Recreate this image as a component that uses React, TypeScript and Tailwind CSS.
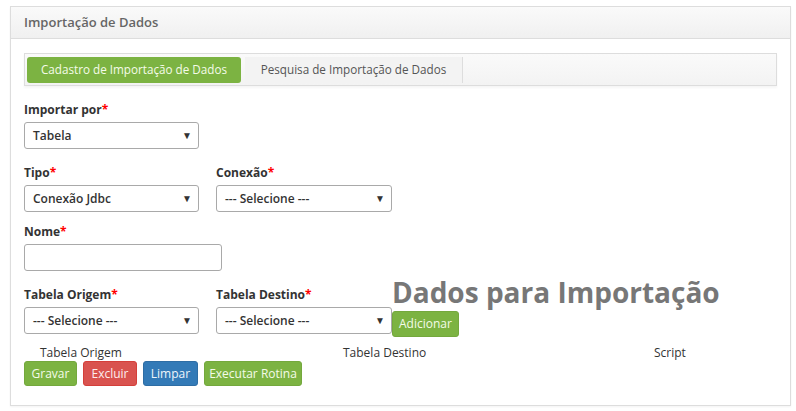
const font = { fontFamily: '"Open Sans", "Liberation Sans", sans-serif' }

type SelectProps = {
   value: string;
   width?: string;
}

const Req = () => <span className="text-[#ff0000]">*</span>

const FakeSelect = ({ value, width = "w-[175px]" }: SelectProps) => (
   <div className={`${width} h-[27px] flex items-center justify-between border border-[#a9a9a9] rounded-[3px] bg-white pl-[8px] pr-[6px]`}>
      <span className="text-[12px] font-semibold text-[#333]">{value}</span>
      <span className="text-[10px] text-[#333]">▼</span>
   </div>
)

const Label = ({ text }: { text: string }) => (
   <div className="text-[12px] font-bold text-[#333] leading-[17px] mb-[4px]">
      {text}
      <Req />
   </div>
)

export default function App() {
   return (
      <div style={font} className="w-[796px] h-[411px] bg-white pt-[6px] pl-[10px]">
         <div className="w-[781px] h-[400px] border border-[#dddddd] shadow-[0_1px_2px_rgba(0,0,0,0.05)]">
            {/* cabecalho */}
            <div className="h-[32px] flex items-center px-[13px] border-b border-[#dddddd] bg-gradient-to-b from-[#fafafa] to-[#f0f0f0]">
               <span className="text-[13px] font-semibold text-[#666]">Importação de Dados</span>
            </div>

            <div className="pl-[13px] pt-[14px]">
               {/* abas */}
               <div className="w-[753px] h-[33px] border border-[#dddddd] flex items-center pl-[2px] bg-gradient-to-b from-[#fafafa] to-[#f3f3f3] shadow-[0_2px_2px_rgba(0,0,0,0.04)]">
                  <div className="w-[214px] h-[26px] rounded-[3px] bg-[#7cb342] flex items-center justify-center text-[11.7px] text-[#f4fbe9]">
                     Cadastro de Importação de Dados
                  </div>
                  <div className="w-[218px] h-[26px] ml-[4px] bg-[#f3f3f3] border-r border-[#dddddd] flex items-center justify-center text-[11.7px] text-[#555]">
                     Pesquisa de Importação de Dados
                  </div>
               </div>

               {/* formulario */}
               <div className="mt-[15px]">
                  <Label text="Importar por" />
                  <FakeSelect value="Tabela" />
               </div>

               <div className="flex mt-[15px]">
                  <div className="w-[192px]">
                     <Label text="Tipo" />
                     <FakeSelect value="Conexão Jdbc" />
                  </div>
                  <div className="w-[192px]">
                     <Label text="Conexão" />
                     <FakeSelect value="--- Selecione ---" width="w-[176px]" />
                  </div>
               </div>

               <div className="mt-[11px]">
                  <Label text="Nome" />
                  <div className="w-[198px] h-[27px] border border-[#a9a9a9] rounded-[3px] bg-white" />
               </div>

               <div className="flex mt-[5px]">
                  <div className="w-[192px] pt-[10px]">
                     <Label text="Tabela Origem" />
                     <FakeSelect value="--- Selecione ---" />
                  </div>
                  <div className="w-[176px] pt-[10px]">
                     <Label text="Tabela Destino" />
                     <FakeSelect value="--- Selecione ---" width="w-[176px]" />
                  </div>
                  <div>
                     <div className="text-[28px] font-bold text-[#777] leading-[32px]">Dados para Importação</div>
                     <button className="mt-[3px] h-[26px] px-[6px] rounded-[3px] bg-[#7cb342] border border-[#74a83d] text-[12px] text-[#f4fbe9]">Adicionar</button>
                  </div>
               </div>

               {/* tabela */}
               <div className="flex text-[12px] text-[#333] leading-[16px] mt-[8px]">
                  <div className="w-[319px] pl-[16px]">Tabela Origem</div>
                  <div className="w-[311px]">Tabela Destino</div>
                  <div>Script</div>
               </div>

               <div className="flex gap-[6px]">
                  <button className="h-[25px] w-[53px] rounded-[3px] bg-[#7cb342] border border-[#74a83d] text-[12px] text-[#f4fbe9]">Gravar</button>
                  <button className="h-[25px] w-[54px] rounded-[3px] bg-[#d9534f] border border-[#d43f3a] text-[12px] text-[#fdeeee]">Excluir</button>
                  <button className="h-[25px] w-[55px] rounded-[3px] bg-[#337ab7] border border-[#2e6da4] text-[12px] text-[#eef5fb]">Limpar</button>
                  <button className="h-[25px] w-[98px] rounded-[3px] bg-[#7cb342] border border-[#74a83d] text-[12px] text-[#f4fbe9]">Executar Rotina</button>
               </div>
            </div>
         </div>
      </div>
   )
}
